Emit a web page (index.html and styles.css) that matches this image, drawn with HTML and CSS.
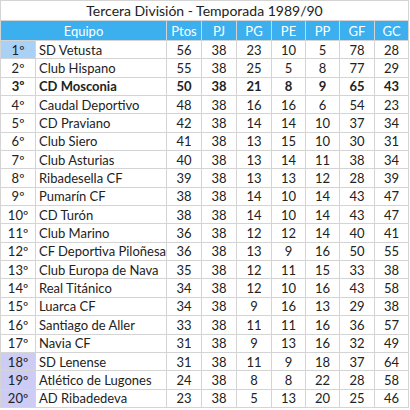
FILE: index.html
```html
<!DOCTYPE html>
<html>
<head>
<meta charset="utf-8">
<link rel="stylesheet" href="styles.css">
</head>
<body>
<table class="standings">
  <colgroup>
    <col class="c-rank"><col class="c-team"><col class="c-n35"><col class="c-n35"><col class="c-n35"><col class="c-n34"><col class="c-n34"><col class="c-n35"><col class="c-n34">
  </colgroup>
  <thead>
    <tr class="title"><th colspan="9">Tercera División - Temporada 1989/90</th></tr>
    <tr class="head"><th colspan="2">Equipo</th><th>Ptos</th><th>PJ</th><th>PG</th><th>PE</th><th>PP</th><th>GF</th><th>GC</th></tr>
  </thead>
  <tbody>
    <tr><td class="rank up">1º</td><td class="team">SD Vetusta</td><td>56</td><td>38</td><td>23</td><td>10</td><td>5</td><td>78</td><td>28</td></tr>
    <tr><td class="rank">2º</td><td class="team">Club Hispano</td><td>55</td><td>38</td><td>25</td><td>5</td><td>8</td><td>77</td><td>29</td></tr>
    <tr class="bold"><td class="rank">3º</td><td class="team">CD Mosconia</td><td>50</td><td>38</td><td>21</td><td>8</td><td>9</td><td>65</td><td>43</td></tr>
    <tr><td class="rank">4º</td><td class="team">Caudal Deportivo</td><td>48</td><td>38</td><td>16</td><td>16</td><td>6</td><td>54</td><td>23</td></tr>
    <tr><td class="rank">5º</td><td class="team">CD Praviano</td><td>42</td><td>38</td><td>14</td><td>14</td><td>10</td><td>37</td><td>34</td></tr>
    <tr><td class="rank">6º</td><td class="team">Club Siero</td><td>41</td><td>38</td><td>13</td><td>15</td><td>10</td><td>30</td><td>31</td></tr>
    <tr><td class="rank">7º</td><td class="team">Club Asturias</td><td>40</td><td>38</td><td>13</td><td>14</td><td>11</td><td>38</td><td>34</td></tr>
    <tr><td class="rank">8º</td><td class="team">Ribadesella CF</td><td>39</td><td>38</td><td>13</td><td>13</td><td>12</td><td>28</td><td>39</td></tr>
    <tr><td class="rank">9º</td><td class="team">Pumarín CF</td><td>38</td><td>38</td><td>14</td><td>10</td><td>14</td><td>43</td><td>47</td></tr>
    <tr><td class="rank">10º</td><td class="team">CD Turón</td><td>38</td><td>38</td><td>14</td><td>10</td><td>14</td><td>43</td><td>47</td></tr>
    <tr><td class="rank">11º</td><td class="team">Club Marino</td><td>36</td><td>38</td><td>12</td><td>12</td><td>14</td><td>40</td><td>41</td></tr>
    <tr><td class="rank">12º</td><td class="team">CF Deportiva Piloñesa</td><td>36</td><td>38</td><td>13</td><td>9</td><td>16</td><td>50</td><td>55</td></tr>
    <tr><td class="rank">13º</td><td class="team">Club Europa de Nava</td><td>35</td><td>38</td><td>12</td><td>11</td><td>15</td><td>33</td><td>38</td></tr>
    <tr><td class="rank">14º</td><td class="team">Real Titánico</td><td>34</td><td>38</td><td>12</td><td>10</td><td>16</td><td>43</td><td>58</td></tr>
    <tr><td class="rank">15º</td><td class="team">Luarca CF</td><td>34</td><td>38</td><td>9</td><td>16</td><td>13</td><td>29</td><td>38</td></tr>
    <tr><td class="rank">16º</td><td class="team">Santiago de Aller</td><td>33</td><td>38</td><td>11</td><td>11</td><td>16</td><td>36</td><td>57</td></tr>
    <tr><td class="rank">17º</td><td class="team">Navia CF</td><td>31</td><td>38</td><td>9</td><td>13</td><td>16</td><td>32</td><td>49</td></tr>
    <tr><td class="rank down">18º</td><td class="team">SD Lenense</td><td>31</td><td>38</td><td>11</td><td>9</td><td>18</td><td>37</td><td>64</td></tr>
    <tr><td class="rank down">19º</td><td class="team">Atlético de Lugones</td><td>24</td><td>38</td><td>8</td><td>8</td><td>22</td><td>28</td><td>58</td></tr>
    <tr><td class="rank down">20º</td><td class="team">AD Ribadedeva</td><td>23</td><td>38</td><td>5</td><td>13</td><td>20</td><td>25</td><td>46</td></tr>
  </tbody>
</table>
</body>
</html>
```
FILE: styles.css
```css
html, body {
  margin: 0;
  padding: 0;
  background: #ffffff;
}
.standings {
  border-collapse: collapse;
  table-layout: fixed;
  width: 409px;
  font-family: Lato, "Open Sans", sans-serif;
  font-size: 13px;
  color: #222222;
}
.c-rank { width: 35px; }
.c-team { width: 131px; }
.c-n35 { width: 35px; }
.c-n34 { width: 34px; }
.standings th,
.standings td {
  border: 1px solid #d4d4d4;
  padding: 0;
  text-align: center;
  white-space: nowrap;
  overflow: hidden;
}
.title th {
  height: 19px;
  font-weight: normal;
  font-size: 14px;
  color: #222222;
}
.head th {
  height: 19px;
  background: #3cafef;
  color: #ffffff;
  font-weight: normal;
  font-size: 13px;
}
.standings td {
  height: 17.35px;
}
.standings td.team {
  text-align: left;
  padding-left: 3px;
}
.rank.up { background: #a9d0f5; }
.rank.down { background: #ccccf5; }
.bold td { font-weight: bold; }
```
